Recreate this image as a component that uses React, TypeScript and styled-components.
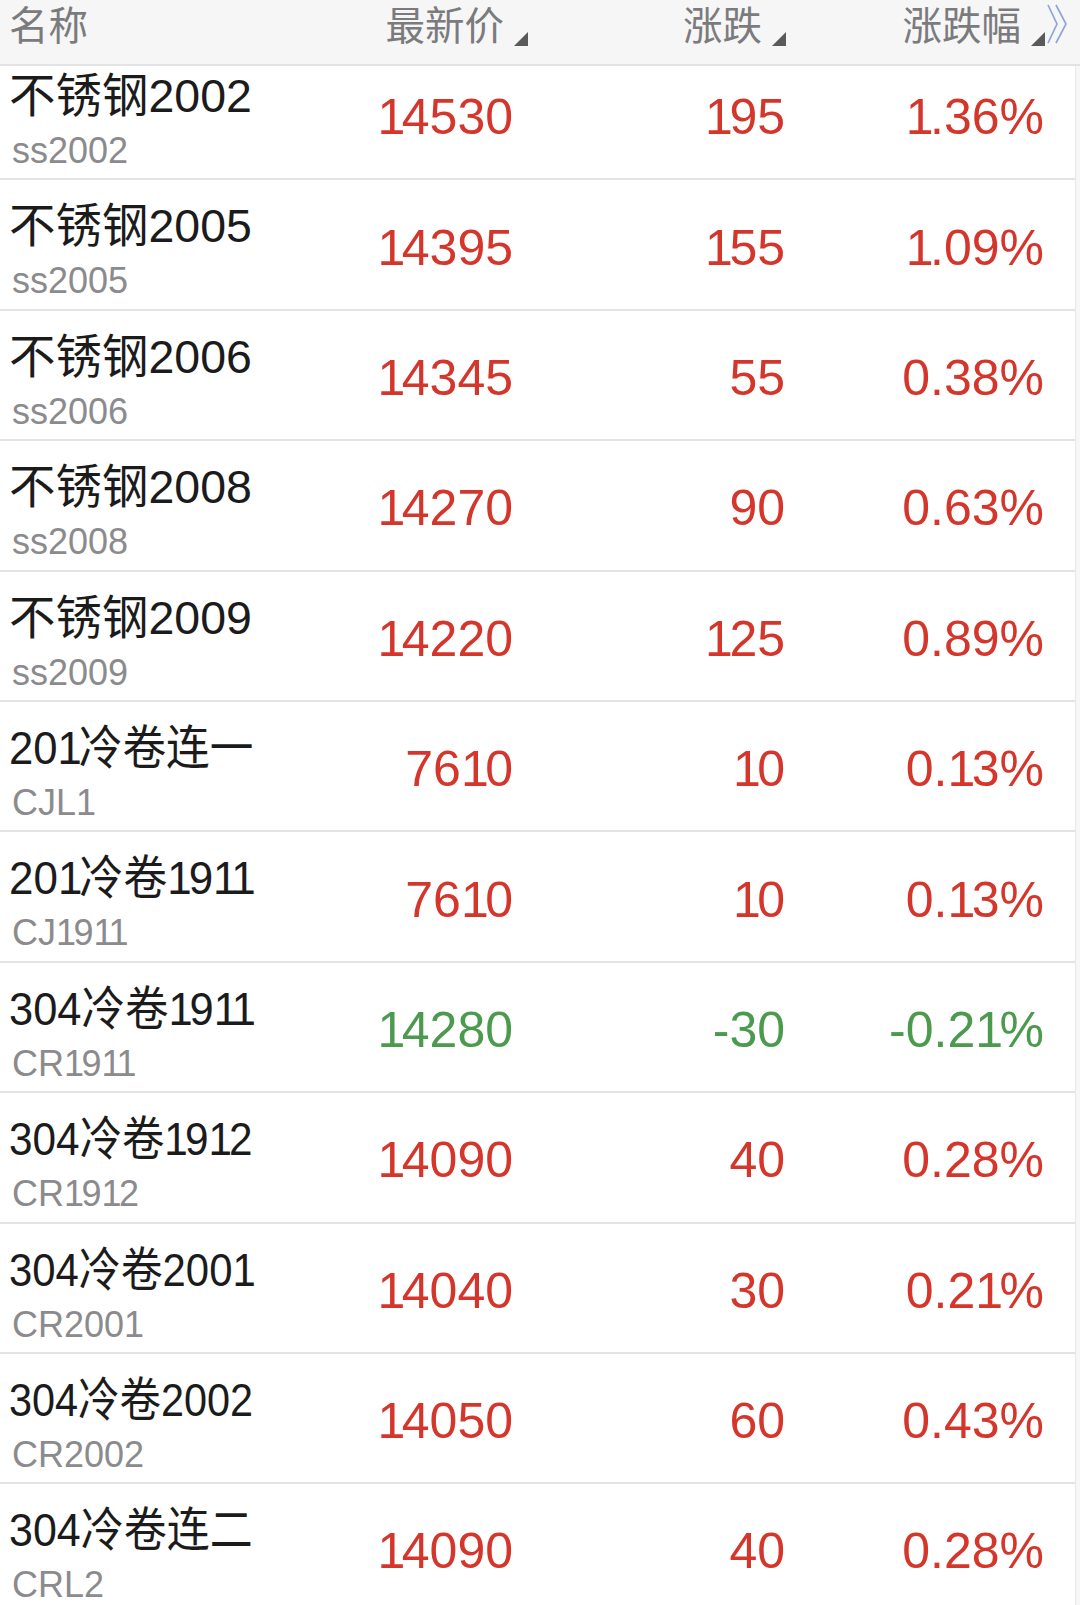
import React, { useLayoutEffect, useRef, useState } from "react";
import styled, { createGlobalStyle } from "styled-components";

const Global = createGlobalStyle`
  html, body { margin: 0; padding: 0; background: #f7f7f8; }
  body { font-family: "Liberation Sans", "Noto Sans CJK SC", sans-serif; }
`;

const Page = styled.div`
  width: 1080px;
  height: 1605px;
  overflow: hidden;
  display: flex;
  flex-direction: column;
  background: #f7f7f8;
`;

const HeaderBar = styled.div`
  flex: none;
  height: 64px;
  border-bottom: 2px solid #e3e3e5;
  background: #f6f6f7;
  display: grid;
  grid-template-columns: 300px 228px 258px 259px 35px;
  position: relative;
  z-index: 2;
`;

const HeadCell = styled.div<{ $align?: "left" | "right" }>`
  display: flex;
  align-items: flex-start;
  justify-content: ${(p) => (p.$align === "left" ? "flex-start" : "flex-end")};
  padding-left: ${(p) => (p.$align === "left" ? "9px" : "0")};
`;

const HeadText = styled.span`
  font-size: 39.5px;
  line-height: 52px;
  color: #7b7b7d;
  white-space: nowrap;
`;

const SortMark = styled.svg`
  flex: none;
  width: 14px;
  height: 14px;
  margin-top: 32px;
  margin-left: 10px;
`;

const MoreCell = styled.div`
  display: flex;
  align-items: flex-start;
`;

const Chevrons = styled.svg`
  width: 22px;
  height: 40px;
  margin-top: 4px;
  margin-left: 2px;
`;

const Body = styled.div`
  flex: 1;
  overflow: hidden;
  width: 1075px;
  background: #ffffff;
  border-right: 1px solid #e9e9eb;
`;

const List = styled.div`
  margin-top: -16px;
`;

const Row = styled.div`
  height: 128.4px;
  border-bottom: 2px solid #e4e4e6;
  display: grid;
  grid-template-columns: 300px 213px 272px 259px 31px;
  align-items: center;
`;

const NameCell = styled.div`
  align-self: start;
  padding: 18px 0 0 9px;
  display: flex;
  flex-direction: column;
  align-items: flex-start;
`;

const Name = styled.span`
  display: inline-block;
  font-size: 46.5px;
  line-height: 57px;
  color: #1b1b1c;
  white-space: nowrap;
  transform-origin: left center;
`;

const Code = styled.span`
  font-size: 36px;
  line-height: 44px;
  margin-top: 4px;
  padding-left: 3px;
  color: #8b8b8d;
  white-space: nowrap;
`;

const Num = styled.div<{ $down?: boolean }>`
  font-size: 50px;
  line-height: 56px;
  padding-top: 6px;
  text-align: right;
  color: ${(p) => (p.$down ? "#4c9a4e" : "#d5362c")};
  white-space: nowrap;
`;

/* the original font sets the figure "1" a little narrower than the other figures */
const One = styled.span`
  letter-spacing: -0.07em;
`;

const Figures = ({ text }: { text: string }) => (
  <>
    {text.split(/(1)/).map((part, i) =>
      part === "1" ? <One key={i}>1</One> : <React.Fragment key={i}>{part}</React.Fragment>
    )}
  </>
);

/* the list squeezes a long name so that it fits the name column */
const NAME_MAX = 244;

const FitName = ({ text }: { text: string }) => {
  const ref = useRef<HTMLSpanElement>(null);
  const [scale, setScale] = useState(1);
  useLayoutEffect(() => {
    const el = ref.current;
    if (!el) return;
    const w = el.offsetWidth;
    setScale(w > NAME_MAX ? NAME_MAX / w : 1);
  }, [text]);
  return (
    <Name ref={ref} style={scale < 1 ? { transform: `scaleX(${scale})` } : undefined}>
      <Figures text={text} />
    </Name>
  );
};

type Item = { name: string; code: string; price: string; chg: string; pct: string };

const data: Item[] = [
  { name: "不锈钢2002", code: "ss2002", price: "14530", chg: "195", pct: "1.36%" },
  { name: "不锈钢2005", code: "ss2005", price: "14395", chg: "155", pct: "1.09%" },
  { name: "不锈钢2006", code: "ss2006", price: "14345", chg: "55", pct: "0.38%" },
  { name: "不锈钢2008", code: "ss2008", price: "14270", chg: "90", pct: "0.63%" },
  { name: "不锈钢2009", code: "ss2009", price: "14220", chg: "125", pct: "0.89%" },
  { name: "201冷卷连一", code: "CJL1", price: "7610", chg: "10", pct: "0.13%" },
  { name: "201冷卷1911", code: "CJ1911", price: "7610", chg: "10", pct: "0.13%" },
  { name: "304冷卷1911", code: "CR1911", price: "14280", chg: "-30", pct: "-0.21%" },
  { name: "304冷卷1912", code: "CR1912", price: "14090", chg: "40", pct: "0.28%" },
  { name: "304冷卷2001", code: "CR2001", price: "14040", chg: "30", pct: "0.21%" },
  { name: "304冷卷2002", code: "CR2002", price: "14050", chg: "60", pct: "0.43%" },
  { name: "304冷卷连二", code: "CRL2", price: "14090", chg: "40", pct: "0.28%" },
];

const Tri = () => (
  <SortMark viewBox="0 0 14 14">
    <polygon points="14,0 14,14 0,14" fill="#5a5a5c" />
  </SortMark>
);

export default function App() {
  return (
    <Page>
      <Global />
      <HeaderBar>
        <HeadCell $align="left">
          <HeadText>名称</HeadText>
        </HeadCell>
        <HeadCell>
          <HeadText>最新价</HeadText>
          <Tri />
        </HeadCell>
        <HeadCell>
          <HeadText>涨跌</HeadText>
          <Tri />
        </HeadCell>
        <HeadCell>
          <HeadText>涨跌幅</HeadText>
          <Tri />
        </HeadCell>
        <MoreCell>
          <Chevrons viewBox="0 0 22 40" fill="none" stroke="#8fa5d8" strokeWidth="1.7">
            <polyline points="1,1 10,20 1,39" />
            <polyline points="9,1 19,20 9,39" />
          </Chevrons>
        </MoreCell>
      </HeaderBar>
      <Body>
        <List>
          {data.map((d) => {
            const down = d.chg.startsWith("-");
            return (
              <Row key={d.code}>
                <NameCell>
                  <FitName text={d.name} />
                  <Code>
                    <Figures text={d.code} />
                  </Code>
                </NameCell>
                <Num $down={down}>
                  <Figures text={d.price} />
                </Num>
                <Num $down={down}>
                  <Figures text={d.chg} />
                </Num>
                <Num $down={down}>
                  <Figures text={d.pct} />
                </Num>
                <div />
              </Row>
            );
          })}
        </List>
      </Body>
    </Page>
  );
}
